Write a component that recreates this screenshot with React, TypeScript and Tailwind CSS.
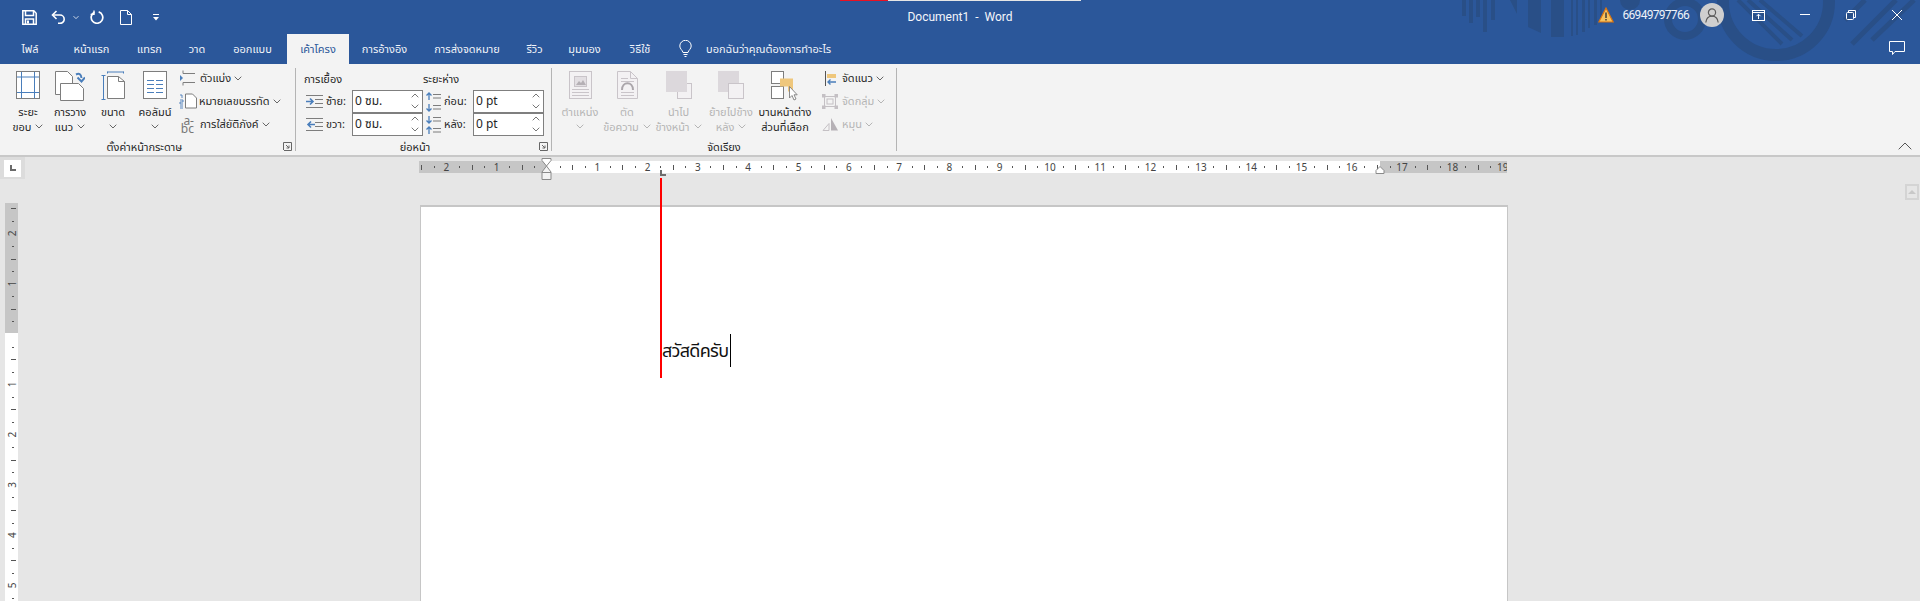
import React from "react";

const Chev = ({ c = "#666", className = "" }: { c?: string; className?: string }) => (
  <svg width="8" height="5" viewBox="0 0 8 5" className={className} fill="none" stroke={c}><path d="M.7.7 4 4l3.300-3.300" /></svg>
);

const BLUE = "#4a7ebb";
const GR = "#7d7d7d";

function BigBtn({ w, icon, lines, chev, chevLine = 1, disabled }: { w: number; icon: React.ReactNode; lines: string[]; chev?: boolean; chevLine?: number; disabled?: boolean }) {
  const col = disabled ? "#b5b5b5" : "#262626";
  return (
    <div className="flex flex-col items-center shrink-0" style={{ width: w, color: col }}>
      <div className="h-[33px] flex items-start justify-center">{icon}</div>
      {lines.filter(Boolean).map((l, i) => (
        <div key={i} className="h-[15px] leading-[15px] whitespace-nowrap flex items-center gap-[4px]">
          {l}
          {chev && i === chevLine && <Chev c={disabled ? "#b5b5b5" : "#666"} />}
        </div>
      ))}
      {chev && chevLine >= lines.filter(Boolean).length && (
        <div className="h-[15px] flex items-center"><Chev c={disabled ? "#b5b5b5" : "#666"} /></div>
      )}
    </div>
  );
}

function SmallBtn({ icon, text, disabled, gap = 3 }: { icon: React.ReactNode; text: string; disabled?: boolean; gap?: number }) {
  return (
    <div className="h-[14px] flex items-center whitespace-nowrap" style={{ color: disabled ? "#b5b5b5" : "#262626" }}>
      <div className="w-[18px] h-[14px] flex items-center justify-center shrink-0 overflow-visible">{icon}</div>
      <span style={{ marginLeft: gap }}>{text}</span>
      <Chev className="ml-[3px]" c={disabled ? "#b5b5b5" : "#666"} />
    </div>
  );
}

function Launcher() {
  return (
    <svg width="9" height="9" viewBox="0 0 9 9" fill="none" stroke="#666"><path d="M.5 8V.5H8.500V8.500H1" /><path d="M3 3l3 3M6 3.500V6H3.500" /></svg>
  );
}

function Group({ w, label, launcher, labelShift = 0, children }: { w: number; label: string; launcher?: boolean; labelShift?: number; children: React.ReactNode }) {
  return (
    <div className="h-[83px] relative flex flex-col shrink-0 border-r border-[#b4b4b4]" style={{ width: w }}>
      <div className="flex pt-[3px] flex-1 min-h-0">{children}</div>
      <div className="h-[12px] mt-[2px] -mb-[2px] flex items-center justify-center leading-[14px] text-[#262626]" style={{ paddingRight: labelShift }}>{label}</div>
      {launcher && <div className="absolute right-[3px] bottom-0"><Launcher /></div>}
    </div>
  );
}

function Spin({ value }: { value: string }) {
  return (
    <div className="w-[71px] h-[23px] border border-[#7f7f7f] bg-white flex items-center justify-between pl-[2px] pr-[3px] -mt-[1px] text-[#262626] text-[12px]">
      <span>{value}</span>
      <div className="flex flex-col gap-[6px]">
        <svg width="8" height="5" viewBox="0 0 8 5" fill="none" stroke="#777"><path d="M.7 4.300 4 1l3.300 3.300" /></svg>
        <svg width="8" height="5" viewBox="0 0 8 5" fill="none" stroke="#777"><path d="M.7.7 4 4l3.300-3.300" /></svg>
      </div>
    </div>
  );
}

function HRuler() {
  const marks: React.ReactNode[] = [];
  for (let i = -10; i <= 76; i++) {
    const v = i / 4;
    const x = 128 + 50.3 * v;
    if (i % 4 === 0) {
      if (v !== 0) marks.push(<text key={i} x={x} y={10} textAnchor="middle" fontSize="10" fill="#444">{Math.abs(v)}</text>);
    } else if (i % 2 === 0) {
      marks.push(<rect key={i} x={Math.round(x)} y={4} width={1} height={5} fill="#555" />);
    } else {
      marks.push(<rect key={i} x={Math.round(x)} y={5} width={1} height={2} fill="#555" />);
    }
  }
  return (
    <svg width="1088" height="12" viewBox="0 0 1088 12" className="block">
      <rect width="1088" height="12" fill="#c6c6c6" />
      <rect x="128" width="833" height="12" fill="#fff" />
      {marks}
    </svg>
  );
}

function VRuler() {
  const marks: React.ReactNode[] = [];
  for (let i = -10; i <= 22; i++) {
    const v = i / 4;
    const y = 131 + 50.3 * v;
    if (i % 4 === 0) {
      if (v !== 0) marks.push(<text key={i} x={0} y={0} transform={`translate(11 ${y}) rotate(-90)`} textAnchor="middle" fontSize="10" fill="#444">{Math.abs(v)}</text>);
    } else if (i % 2 === 0) {
      marks.push(<rect key={i} x={6} y={Math.round(y)} width={5} height={1} fill="#555" />);
    } else {
      marks.push(<rect key={i} x={7} y={Math.round(y)} width={2} height={1} fill="#555" />);
    }
  }
  return (
    <svg width="13" height="398" viewBox="0 0 13 398" className="block">
      <rect width="13" height="398" fill="#fff" />
      <rect width="13" height="130" fill="#c6c6c6" />
      {marks}
    </svg>
  );
}

const tabs: [string, number][] = [
  ["ไฟล์", 60], ["หน้าแรก", 63], ["แทรก", 53], ["วาด", 42], ["ออกแบบ", 69],
  ["เค้าโครง", 62], ["การอ้างอิง", 71], ["การส่งจดหมาย", 94], ["รีวิว", 41], ["มุมมอง", 59], ["วิธีใช้", 52],
];

function Decoration() {
  const c = "#294f87";
  return (
    <svg width="480" height="64" viewBox="0 0 480 64" className="absolute right-0 top-0" fill={c}>
      <rect x="22" width="4" height="16" /><rect x="29" width="4" height="23" /><rect x="36" width="4" height="17" /><rect x="43" width="4" height="32" /><rect x="51" width="4" height="20" />
      <path d="M70 0h7v14zM88 0h13v33l-13-6zM111 0h13v37h-13z" />
      <rect x="131" width="2" height="36" /><rect x="136" width="2" height="35" /><rect x="142" width="3" height="32" /><rect x="148" width="2" height="28" /><rect x="154" width="3" height="25" /><rect x="160" width="2" height="20" />
      <path d="M180 0h20a10 10 0 0 1-20 0z" />
      <circle cx="245" cy="19" r="17" fill="none" stroke={c} strokeWidth="8" />
      <circle cx="336" cy="2" r="53" fill="none" stroke={c} strokeWidth="12" />
      <g fill="none" stroke={c} strokeWidth="4">
        <path d="M298 0l44 44M308 0l44 40M320 0l42 36" />
        <path d="M405 20L425 0M412 44L456 0M432 40L474 0" strokeWidth="5" />
      </g>
    </svg>
  );
}

export default function App() {
  return (
    <div className="w-[1920px] h-[601px] overflow-hidden flex flex-col bg-[#e6e6e6] text-[11px] font-['Noto_Sans','Noto_Sans_Thai','Tahoma','DejaVu_Sans',sans-serif]">
      {/* Header */}
      <div className="relative h-[64px] bg-[#2b579a] text-white shrink-0">
        <Decoration />
        <div className="absolute left-[840px] top-0 h-[1px] w-[48px] bg-[#e81123]" />
        <div className="absolute left-[888px] top-0 h-[1px] w-[193px] bg-[#e6e6e6]" />
        <div className="relative h-[34px] flex items-center justify-between">
          <div className="flex items-center w-[860px]">
            <svg className="ml-[22px]" width="15" height="15" viewBox="0 0 15 15" fill="none" stroke="#fff" strokeWidth="1.5"><path d="M.8.8h11l2.400 2.400v11H.8z" /><path d="M3.500 1v4.500h8V1" /><path d="M3.500 14V9h8v5" /><rect x="5" y="10.500" width="2" height="3" fill="#fff" stroke="none" /></svg>
            <svg className="ml-[14px]" width="15" height="14" viewBox="0 0 15 14" fill="none" stroke="#fff" strokeWidth="1.6"><path d="M5.500 1 1.500 5l4 4" /><path d="M2 5h7a4.200 4.200 0 0 1 0 8.400H7" /></svg>
            <Chev className="ml-[6px] scale-75" c="#fff" />
            <svg className="ml-[10px]" width="14" height="14" viewBox="0 0 14 14" fill="none" stroke="#fff" strokeWidth="1.7"><path d="M4.500 2.200a5.800 5.800 0 1 0 4.200-.3" /><path d="M4 .6v3.800H.6" strokeWidth="1.4" /></svg>
            <svg className="ml-[16px]" width="12" height="15" viewBox="0 0 12 15" fill="none" stroke="#fff"><path d="M.5.5h7l4 4v10H.5z" /><path d="M7.500.5v4h4" /></svg>
            <svg className="ml-[21px]" width="6" height="7" viewBox="0 0 6 7" fill="#fff"><rect y="0" width="6" height="1" /><path d="M0 3h6L3 6.500z" /></svg>
          </div>
          <div className="absolute left-0 right-0 top-[8px] text-center text-[12px] leading-[18px] text-[#f4f6fa] pointer-events-none font-['Roboto',sans-serif]">Document1&nbsp; -&nbsp; Word</div>
          <div className="flex items-center -mt-[4px]">
            <svg width="16" height="16" viewBox="0 0 16 16"><path d="M8 1 15.200 15H.8z" fill="#f6c25f" stroke="#d9730f" strokeWidth="1.2" /><rect x="7.300" y="5.500" width="1.400" height="5.500" fill="#333" /><rect x="7.300" y="12" width="1.400" height="1.500" fill="#333" /></svg>
            <span className="ml-[9px] text-[12px] leading-[18px] tracking-[-0.7px] text-[#eef2f8] font-['Roboto',sans-serif]">66949797766</span>
            <div className="ml-[11px] w-[24px] h-[24px] rounded-full bg-[#cfcfcf] flex items-center justify-center">
              <svg width="14" height="15" viewBox="0 0 14 15" fill="none" stroke="#5c5c5c" strokeWidth="1.2"><circle cx="7" cy="4.500" r="3.600" /><path d="M.8 14.500c.5-4 2.800-6.300 6.200-6.300s5.700 2.300 6.200 6.300" /></svg>
            </div>
            <svg className="ml-[28px]" width="13" height="11" viewBox="0 0 13 11" fill="none" stroke="#fff"><rect x=".5" y=".5" width="12" height="10" /><path d="M.5 2.500h12" /><path d="M6.500 9V4.500M4.500 6.200l2-2 2 2" /></svg>
            <svg className="ml-[35px]" width="10" height="2" viewBox="0 0 10 2" fill="#fff"><rect width="10" height="1" /></svg>
            <svg className="ml-[36px]" width="10" height="10" viewBox="0 0 10 10" fill="none" stroke="#fff"><rect x=".5" y="2.500" width="7" height="7" rx="1" /><path d="M2.500 2.500V.5h7v7H7.500" /></svg>
            <svg className="ml-[36px] mr-[18px]" width="10" height="10" viewBox="0 0 10 10" fill="none" stroke="#fff"><path d="M0 0l10 10M10 0 0 10" /></svg>
          </div>
        </div>
        <div className="relative h-[30px] flex">
          {tabs.map(([t, w], i) => (
            <div key={t} className={`flex items-center justify-center whitespace-nowrap ${i === 5 ? "bg-[#f3f3f3] text-[#2b579a]" : "text-[#f1f4f9]"}`} style={{ width: w }}>{t}</div>
          ))}
          <svg className="ml-[13px] mt-[6px]" width="13" height="18" viewBox="0 0 13 18" fill="none" stroke="#fff"><path d="M4 12.500C3.500 10 .8 9 .8 6a5.700 5.700 0 0 1 11.400 0c0 3-2.700 4-3.200 6.500z" /><path d="M4.500 14.500h4M5.500 16.500h2" /></svg>
          <div className="ml-[14px] flex items-center whitespace-nowrap text-[#f1f4f9]">บอกฉันว่าคุณต้องการทำอะไร</div>
          <svg className="absolute left-[1889px] top-[7px]" width="16" height="15" viewBox="0 0 16 15" fill="none" stroke="#fff"><path d="M.5.5h15v10H6l-2.500 3v-3H.5z" /></svg>
        </div>
      </div>

      {/* Ribbon */}
      <div className="relative h-[93px] shrink-0 bg-[#f3f3f3] border-b-2 border-[#c8c8c8] pt-[4px] flex">
        <Group w={296} label="ตั้งค่าหน้ากระดาษ" launcher labelShift={6}>
          <div className="flex pl-[6px]">
            <BigBtn w={44} lines={["ระยะ", "ขอบ"]} chev icon={
              <svg width="24" height="28" viewBox="0 0 24 28" fill="#fff"><rect x=".5" y=".5" width="23" height="27" stroke={GR} /><path d="M5.500 1v26M18.500 1v26M1 6h22M1 21.500h22" stroke={BLUE} fill="none" /></svg>
            } />
            <BigBtn w={40} lines={["การวาง", "แนว"]} chev icon={
              <svg width="30" height="30" viewBox="0 0 30 30" fill="#fff" stroke={GR}><path d="M.5.500h12l5 5v18H.5z" /><path d="M5.500 12.500h18l5 5v12h-23z" /><path d="M21 3.500c3-1.500 5-.5 5.500 3.500" fill="none" stroke={BLUE} strokeWidth="2" /><path d="M22.500 6.500l4 4 3.500-4" fill="none" stroke={BLUE} strokeWidth="2" /></svg>
            } />
            <BigBtn w={46} lines={["ขนาด"]} chev chevLine={1} icon={
              <svg width="25" height="30" viewBox="0 0 25 30" fill="#fff"><path d="M6.500.5h16M6.500 0v2M22.500 0v2M.5 4h4M2.500 4v24M.5 28h4" stroke={BLUE} fill="none" transform="translate(0 .5)" /><path d="M6.500 5.500h11l6 5v17h-17z" stroke={GR} /><path d="M17.500 5.500v5h6" stroke={GR} fill="none" /></svg>
            } />
            <div className="flex flex-col items-center w-[38px] shrink-0 text-[#262626]">
              <div className="h-[33px]"><svg width="24" height="28" viewBox="0 0 24 28" fill="#fff"><rect x=".5" y=".5" width="23" height="27" stroke={GR} /><path d="M4 9.500h7M13 9.500h7M4 13.500h7M13 13.500h7M4 17.500h7M13 17.500h7M4 21.500h7M13 21.500h7" stroke={BLUE} /></svg></div>
              <div className="h-[15px] leading-[15px] whitespace-nowrap">คอลัมน์</div>
              <div className="h-[15px] flex items-center"><Chev /></div>
            </div>
            <div className="ml-[5px] flex flex-col gap-[9px] shrink-0">
              <SmallBtn text="ตัวแบ่ง" icon={<svg width="16" height="16" viewBox="0 0 16 16" fill="none" stroke={GR}><path d="M3 .5v3h12M3 15.500v-3h12" /><path d="M0 5l3 3-3 3z" fill={BLUE} stroke="none" /></svg>} />
              <SmallBtn text="หมายเลขบรรทัด" gap={2} icon={<svg width="18" height="16" viewBox="0 0 18 16" fill="#fff" stroke={GR}><path d="M6.500 1h7l4 4v10h-11z" /><path d="M1 2h2v3M1 7h3v2H1v2h3M1 13h3M1 15h3" stroke={BLUE} fill="none" strokeWidth=".9" /></svg>} />
              <div className="h-[14px] flex items-center whitespace-nowrap text-[#262626]">
                <div className="w-[18px] h-[14px] text-[#777] text-[12px] leading-[8px] text-right pr-[3px] -mt-[1px]">a-<br />bc</div>
                <span className="ml-[3px]">การใส่ยัติภังค์</span>
                <Chev className="ml-[3px]" />
              </div>
            </div>
          </div>
        </Group>

        <Group w={256} label="ย่อหน้า" launcher labelShift={17}>
          <div className="flex pl-[8px] flex-col">
            <div className="h-[15px] mb-[4px] flex items-center leading-[15px] text-[#262626]">
              <span className="w-[119px]">การเยื้อง</span><span>ระยะห่าง</span>
            </div>
            {[
              ["ซ้าย:", "0 ซม.", "ก่อน:", "0 pt", true],
              ["ขวา:", "0 ซม.", "หลัง:", "0 pt", false],
            ].map(([a, b, c, d, up]) => (
              <div key={a as string} className="flex items-center h-[23px] text-[#262626]">
                <svg className="ml-[2px]" width="17" height="13" viewBox="0 0 17 13" stroke={GR}><path d="M0 .5h17M9 4.500h8M9 8.500h8M0 12.500h17" /><path d={up ? "M0 6.500h6M4 3.500l3 3-3 3" : "M17 6.500h-6M13 3.500l-3 3 3 3"} stroke={BLUE} strokeWidth="1.600" fill="none" transform={up ? "" : "translate(-8 0)"} /></svg>
                <span className="w-[26px] ml-[3px] whitespace-nowrap">{a}</span>
                <Spin value={b as string} />
                <svg className="ml-[2px]" width="17" height="20" viewBox="0 0 17 20" stroke={GR}><path d="M8 2.500h8M8 6h8M8 13.500h8M8 17h8" /><path d={up ? "M4 1v7M1.500 3.500 4 1l2.500 2.500M4 19v-7M1.500 16.500 4 19l2.500-2.500" : "M4 8V1M1.500 5.500 4 8l2.500-2.500M4 12v7M1.500 14.500 4 12l2.500 2.500"} stroke={BLUE} strokeWidth="1.300" fill="none" /></svg>
                <span className="w-[29px] ml-[2px] whitespace-nowrap">{c}</span>
                <Spin value={d as string} />
              </div>
            ))}
          </div>
        </Group>

        <Group w={345} label="จัดเรียง" labelShift={0}>
          <div className="flex pl-[3px]">
            <BigBtn w={50} disabled lines={["ตำแหน่ง"]} chev chevLine={1} icon={
              <svg width="23" height="28" viewBox="0 0 23 28" fill="#f3f1f3" stroke="#c9c4c9"><rect x=".5" y=".5" width="22" height="27" /><rect x="5.500" y="5.500" width="12" height="10" fill="#e3dfe3" /><path d="M7 14l3-4 2 2 2-3 3 5z" fill="#b5b0b5" stroke="none" /><path d="M3 18.500h17M3 21.500h17M3 24.500h17" fill="none" /></svg>
            } />
            <BigBtn w={44} disabled lines={["ตัด", "ข้อความ"]} chev icon={
              <svg width="21" height="28" viewBox="0 0 21 28" fill="#f3f1f3" stroke="#c9c4c9"><path d="M.5.500h13l7 7v20H.5z" /><path d="M13.500.5v7h7" fill="none" /><path d="M4 7.500h7M4 10.500h13M4 21.500h13M4 24.500h13" fill="none" /><path d="M5 19c0-9 11-9 11 0" fill="none" stroke="#aaa5aa" strokeWidth="2" /></svg>
            } />
            <BigBtn w={59} disabled lines={["นำไป", "ข้างหน้า"]} chev icon={
              <svg width="26" height="28" viewBox="0 0 26 28" stroke="#c9c4c9"><rect x="11.500" y="12.500" width="14" height="15" fill="#f3f1f3" /><rect width="21" height="21" fill="#dcd8dc" stroke="none" /></svg>
            } />
            <BigBtn w={46} disabled lines={["ย้ายไปข้าง", "หลัง"]} chev icon={
              <svg width="26" height="28" viewBox="0 0 26 28" stroke="#c9c4c9"><rect width="21" height="21" fill="#dcd8dc" stroke="none" /><rect x="10.500" y="12.500" width="15" height="15" fill="#f3f1f3" /></svg>
            } />
            <div className="ml-[2px]">
              <BigBtn w={58} lines={["บานหน้าต่าง", "ส่วนที่เลือก"]} icon={
                <svg width="28" height="30" viewBox="0 0 28 30" fill="#fff" stroke={GR}><rect x=".5" y=".5" width="12" height="12" /><rect x=".5" y="15.500" width="12" height="12" /><path d="M9 7.500h13v13h-5v-5H9z" fill="#efc77c" stroke="none" /><path d="M18.500 15.500v11.500l2.500-2.500 2 4.500 2-1-2-4.200h3.200z" fill="#fff" strokeWidth=".9" /></svg>
              } />
            </div>
            <div className="ml-[7px] flex flex-col gap-[9px] shrink-0">
              <SmallBtn text="จัดแนว" gap={3} icon={<svg width="12" height="15" viewBox="0 0 12 15"><rect x="1" width="1" height="15" fill="#555" /><rect x="3" y="3" width="9" height="4" fill="#efc77c" /><path d="M12 11H4M6.500 8.500 4 11l2.500 2.500" stroke={BLUE} strokeWidth="1.400" fill="none" /></svg>} />
              <SmallBtn disabled text="จัดกลุ่ม" gap={3} icon={<svg width="16" height="15" viewBox="0 0 16 15" fill="none" stroke="#c4c0c4"><rect x="2.500" y="2.500" width="11" height="10" /><rect x="5" y="5" width="6" height="5" /><rect width="3" height="3" fill="#c4c0c4" /><rect x="13" width="3" height="3" fill="#c4c0c4" /><rect y="12" width="3" height="3" fill="#c4c0c4" /><rect x="13" y="12" width="3" height="3" fill="#c4c0c4" /></svg>} />
              <SmallBtn disabled text="หมุน" gap={3} icon={<svg width="16" height="13" viewBox="0 0 16 13" fill="none" stroke="#c4c0c4"><path d="M1 12.500 7 5.500v7z" /><path d="M9 0l7 12.500H9z" fill="#b5b0b5" stroke="none" /></svg>} />
            </div>
          </div>
        </Group>

        <svg className="absolute right-[8px] bottom-[5px]" width="14" height="8" viewBox="0 0 14 8" fill="none" stroke="#555"><path d="M.7 7.300 7 1l6.300 6.300" /></svg>
      </div>

      {/* Workspace */}
      <div className="flex-1 min-h-0 flex overflow-hidden">
        <div className="w-[25px] shrink-0">
          <div className="w-[25px] h-[22px] bg-[#dcdcdc] flex items-center justify-center">
            <div className="w-[17px] h-[17px] bg-white flex items-center justify-center">
              <svg width="6" height="6" viewBox="0 0 6 6" fill="#6a6a6a"><path d="M0 0h2v4h4v2H0z" /></svg>
            </div>
          </div>
          <div className="ml-[5px] mt-[24px]"><VRuler /></div>
        </div>
        <div className="flex-1 min-w-0 relative">
          <div className="ml-[394px] mt-[4px] relative w-[1088px]">
            <HRuler />
            <svg className="absolute left-[122px] -top-[3px]" width="12" height="22" viewBox="0 0 12 22" fill="#fff" stroke="#8a8a8a"><path d="M1 .5h9v2L5.500 8 1 2.500z" /><path d="M5.500 8 10 14v7.500H1V14z" fill="#f3f3f3" /><path d="M1 14.500h9" /></svg>
            <svg className="absolute left-[956px] top-[5px]" width="10" height="8" viewBox="0 0 10 8" fill="#fff" stroke="#8a8a8a"><path d="M5 .5l4 4v3H1v-3z" /></svg>
            <svg className="absolute left-[241px] top-[9px]" width="6" height="6" viewBox="0 0 6 6" fill="#6d6d6d"><path d="M0 0h2v4h4v2H0z" /></svg>
          </div>
          <div className="absolute left-[635px] top-[21px] w-[2px] h-[200px] bg-[#ff0000] z-10" />
          <div className="ml-[395px] mt-[32px] w-[1088px] h-[400px] bg-white border-t-2 border-x border-[#c6c6c6] pl-[241px] pt-[127px]">
            <div className="flex items-start h-[33px]">
              <span className="text-[18px] leading-[33px] tracking-[-0.7px] text-[#111] whitespace-nowrap">สวัสดีครับ</span>
              <span className="ml-[2px] w-[1px] h-[33px] bg-black" />
            </div>
          </div>
        </div>
        <div className="w-[15px] shrink-0 pt-[27px]">
          <div className="w-[14px] h-[16px] border-2 border-[#d4d4d4] flex items-center justify-center">
            <svg width="8" height="4" viewBox="0 0 8 4" fill="#c8c8c8"><path d="M4 0l4 4H0z" /></svg>
          </div>
        </div>
      </div>
    </div>
  );
}
